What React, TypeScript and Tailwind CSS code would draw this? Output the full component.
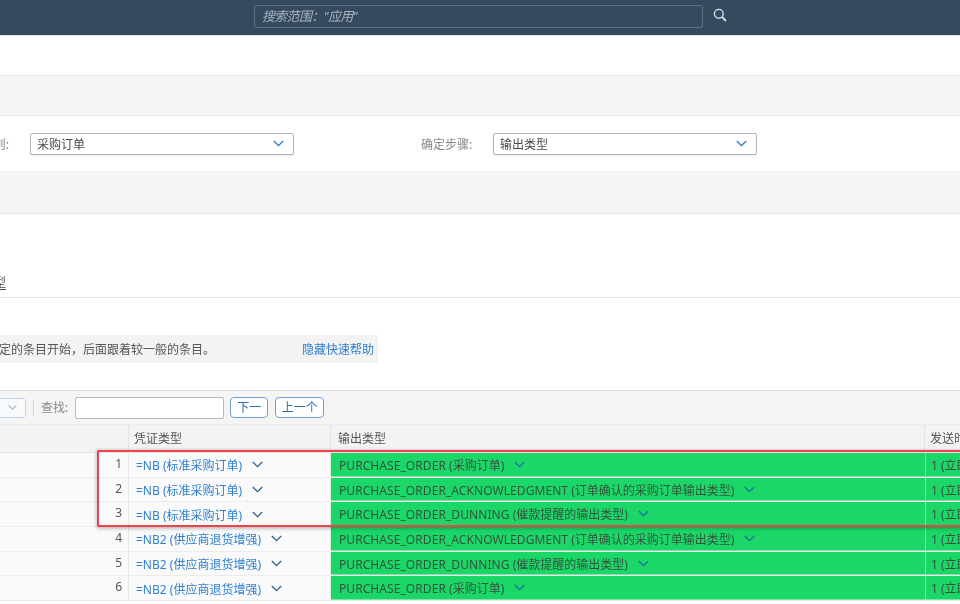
import React from "react";

const Chev = ({ c = "#1d6fb8", w = 11 }: { c?: string; w?: number }) => (
  <svg width={w} height={7} viewBox="0 0 11 7" fill="none" className="shrink-0">
    <path d="M0.8 1 L5.5 5.6 L10.2 1" stroke={c} strokeWidth="1.3" />
  </svg>
);

const rows = [
  ["1", "=NB", "(标准采购订单)", "PURCHASE_ORDER", "(采购订单)"],
  ["2", "=NB", "(标准采购订单)", "PURCHASE_ORDER_ACKNOWLEDGMENT", "(订单确认的采购订单输出类型)"],
  ["3", "=NB", "(标准采购订单)", "PURCHASE_ORDER_DUNNING", "(催款提醒的输出类型)"],
  ["4", "=NB2", "(供应商退货增强)", "PURCHASE_ORDER_ACKNOWLEDGMENT", "(订单确认的采购订单输出类型)"],
  ["5", "=NB2", "(供应商退货增强)", "PURCHASE_ORDER_DUNNING", "(催款提醒的输出类型)"],
  ["6", "=NB2", "(供应商退货增强)", "PURCHASE_ORDER", "(采购订单)"],
];

const Select = ({ text }: { text: string }) => (
  <div className="w-[264px] h-[22px] bg-white border border-[#b5b5b5] rounded-[2px] flex items-center justify-between pl-[6px] pr-[9px] text-[12px] text-[#4a4a4a] shadow-[0_1px_1px_rgba(0,0,0,0.08)]">
    <span className="pt-[2px]">{text}</span>
    <Chev c="#2f77c0" w={11} />
  </div>
);

export default function App() {
  return (
    <div className="relative w-[960px] h-[604px] overflow-hidden bg-white text-[12px] text-[#555] font-['Noto_Sans','Noto_Sans_CJK_SC',sans-serif] blur-[0.3px]">
      <header className="h-[35px] bg-[#354a5f] flex items-center pl-[254px]">
        <div className="w-[449px] h-[23px] mb-[2px] border border-[#5b7189] rounded-[2px] flex items-center pl-[7px] text-[13px] italic tracking-[-0.7px] text-[#a9b4be]">
          搜索范围："应用"
        </div>
        <svg width="14" height="14" viewBox="0 0 14 14" fill="none" className="ml-[10px] mb-[5px]">
          <circle cx="5.8" cy="5.8" r="4.4" stroke="#d5dde4" strokeWidth="1.4" />
          <path d="M9 9 L13 13" stroke="#d5dde4" strokeWidth="2" />
        </svg>
      </header>
      <div className="h-[40px] border-t border-[#e8e8e8]" />
      <div className="h-[41px] bg-[#f5f5f5] border-y border-[#e9e9e9]" />
      <div className="h-[55px] flex items-center">
        <span className="w-[30px] shrink-0 pt-[2px] text-[#888] whitespace-nowrap flex justify-end pr-[21px]">
          <span className="mr-[-21px] pr-[21px]">则:</span>
        </span>
        <Select text="采购订单" />
        <span className="ml-[127px] w-[72px] pt-[2px] text-[#888] whitespace-nowrap">确定步骤:</span>
        <Select text="输出类型" />
      </div>
      <div className="h-[43px] bg-[#f5f5f5] border-b border-[#e6e6e6]" />
      <div className="h-[84px] flex items-end border-b border-[#e8e8e8]">
        <span className="ml-[-6px] mb-[5px] underline underline-offset-2 text-[#444]">型</span>
      </div>
      <div className="h-[37px]" />
      <div className="h-[28px] w-[378px] bg-[#f3f3f3] flex items-center justify-between pr-[4px]">
        <span className="text-[#555] ml-[-1px] pt-[2px] whitespace-nowrap">定的条目开始，后面跟着较一般的条目。</span>
        <span className="text-[#2d7fd3] pt-[2px]">隐藏快速帮助</span>
      </div>
      <div className="h-[27px]" />
      <div className="h-[34px] bg-[#f5f5f5] border-t border-[#dcdcdc] flex items-center">
        <div className="w-[27px] h-[20px] ml-[-1px] bg-[#f7f9fb] border border-[#c3d7ea] rounded-r-[4px] flex items-center justify-center">
          <Chev c="#9fb3c5" w={9} />
        </div>
        <div className="w-px h-[18px] bg-[#d5d5d5] ml-[7px]" />
        <span className="ml-[7px] text-[#888]">查找:</span>
        <div className="w-[149px] h-[22px] ml-[7px] bg-white border border-[#b9b9b9] rounded-[2px]" />
        <button className="w-[38px] h-[21px] ml-[6px] bg-white border border-[#6f9fd0] rounded-[4px] text-[12px] text-[#2d6fb0]">下一</button>
        <button className="w-[49px] h-[21px] ml-[7px] bg-white border border-[#6f9fd0] rounded-[4px] text-[12px] text-[#2d6fb0]">上一个</button>
      </div>
      <div className="grid grid-cols-[129px_202px_594px_1fr] h-[29px] bg-[#f3f3f3] border-t border-[#ececec] border-b border-b-[#e4e4e4] text-[#555]">
        <div className="border-r border-[#e4e4e4]" />
        <div className="border-r border-[#e4e4e4] pl-[5px] flex items-center">凭证类型</div>
        <div className="border-r border-[#e4e4e4] pl-[7px] flex items-center">输出类型</div>
        <div className="pl-[5px] flex items-center whitespace-nowrap">发送时间</div>
      </div>
      {rows.map((r) => (
        <div key={r[0]} className="grid grid-cols-[129px_202px_594px_1fr] h-[24.7px] border-b border-[#ececec] bg-[#fafafa]">
          <div className="border-r border-[#e8e8e8] text-right pr-[6px] text-[#555] text-[12px] leading-[21px]">{r[0]}</div>
          <div className="border-r border-[#e8e8e8] pl-[7px] flex items-center gap-[10px] text-[#2d7fd3] whitespace-nowrap">
            <span className="pt-[3px]">{r[1]} {r[2]}</span>
            <Chev c="#2d5f96" />
          </div>
          <div className="bg-[#1bd768] border-b border-[#7fe5a7] pl-[8px] flex items-center gap-[10px] text-[#35523f] whitespace-nowrap">
            <span className="pt-[3px]"><span className="tracking-[0.07px]">{r[3]}</span> {r[4]}</span>
            <Chev c="#1a70a0" />
          </div>
          <div className="bg-[#1bd768] border-l border-[#7fe5a7] border-b pl-[5px] pt-[3px] flex items-center text-[#35523f] whitespace-nowrap">1 (立即发送)</div>
        </div>
      ))}
      <div className="absolute left-[97px] top-[450px] w-[880px] h-[77px] border-2 border-[#f0444c] rounded-[1px] shadow-[0_1px_4px_rgba(0,0,0,0.35)]" />
    </div>
  );
}
